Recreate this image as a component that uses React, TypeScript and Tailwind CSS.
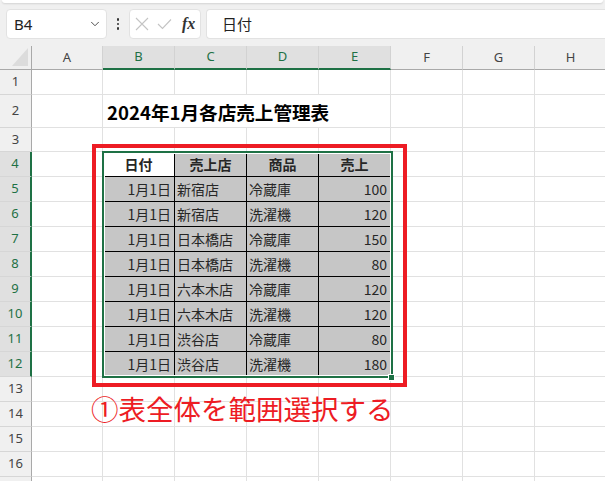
import { ChevronDown } from 'lucide-react'

// Sheet geometry (px): row header, then columns A..H
const COLS = ['A', 'B', 'C', 'D', 'E', 'F', 'G', 'H']
const COL_W = ['w-[71px]', 'w-[72px]', 'w-[72px]', 'w-[72px]', 'w-[72px]', 'w-[72px]', 'w-[72px]', 'w-[72px]']
const ROW_H = ['h-[25px]', 'h-[33px]', 'h-[24px]', 'h-[25px]', 'h-[25px]', 'h-[25px]', 'h-[25px]', 'h-[25px]', 'h-[25px]', 'h-[25px]', 'h-[25px]', 'h-[25px]', 'h-[25px]', 'h-[25px]', 'h-[25px]', 'h-[25px]', 'h-[25px]']

const HEAD = ['日付', '売上店', '商品', '売上']
const DATA = [
  ['1月1日', '新宿店', '冷蔵庫', '100'],
  ['1月1日', '新宿店', '洗濯機', '120'],
  ['1月1日', '日本橋店', '冷蔵庫', '150'],
  ['1月1日', '日本橋店', '洗濯機', '80'],
  ['1月1日', '六本木店', '冷蔵庫', '120'],
  ['1月1日', '六本木店', '洗濯機', '120'],
  ['1月1日', '渋谷店', '冷蔵庫', '80'],
  ['1月1日', '渋谷店', '洗濯機', '180'],
]

const UI_FONT = "font-['Segoe_UI','Noto_Sans',sans-serif]"
const JP_FONT = "font-['Noto_Sans_CJK_JP',sans-serif]"

function FormulaBar() {
  return (
    <div className="h-[46px] shrink-0 bg-[#f0f0f0]">
      <div className="mx-[2px] h-[3px] rounded-b-[6px] bg-white shadow-[0_1px_2px_rgba(0,0,0,0.12)]" />
      <div className="mt-[6px] flex h-[30px] pl-[6px]">
        {/* Name box */}
        <div className="flex w-[101px] items-center justify-between rounded-[4px] border border-[#e2e2e2] bg-white pl-[7px] pr-[4px]">
          <span className={`${UI_FONT} text-[15px] text-[#222]`}>B4</span>
          <ChevronDown size={14} strokeWidth={1.6} className="text-[#444]" />
        </div>
        <div className="flex w-[22px] flex-col items-center justify-center gap-[2px]">
          <span className="h-[2.5px] w-[2.5px] rounded-full bg-[#333]" />
          <span className="h-[2.5px] w-[2.5px] rounded-full bg-[#333]" />
          <span className="h-[2.5px] w-[2.5px] rounded-full bg-[#333]" />
        </div>
        {/* Cancel / enter / function */}
        <div className="flex w-[72px] items-center rounded-[4px] border border-[#e2e2e2] bg-white pl-[4px]">
          <svg width="14" height="14" viewBox="0 0 14 14" className="ml-[1px]">
            <path d="M1 1L13 13M13 1L1 13" stroke="#c4c4c4" strokeWidth="1.1" fill="none" />
          </svg>
          <svg width="15" height="12" viewBox="0 0 15 12" className="ml-[8px]">
            <path d="M1 6L5.5 10.5L14 1.5" stroke="#c4c4c4" strokeWidth="1.1" fill="none" />
          </svg>
          <span className="ml-[10px] font-['Liberation_Serif',serif] text-[16px] font-bold italic leading-none text-[#333]">fx</span>
        </div>
        <div className="ml-[5px] flex flex-1 items-center rounded-l-[4px] border border-r-0 border-[#e2e2e2] bg-white pl-[15px]">
          <span className={`${JP_FONT} text-[15px] text-[#222]`}>日付</span>
        </div>
      </div>
    </div>
  )
}

function ColumnHeader() {
  return (
    <div className={`flex h-[24px] shrink-0 bg-[#f0f0f0] ${UI_FONT} text-[13px]`}>
      <div className="relative w-[32px] shrink-0 border-b border-r border-[#a9a9a9]">
        <svg width="31" height="23" className="absolute left-0 top-0">
          <polygon points="28,2 28,20 12,20" fill="#dcdcdc" />
        </svg>
      </div>
      {COLS.map((c, i) => {
        const sel = i >= 1 && i <= 4
        return (
          <div
            key={c}
            className={`${COL_W[i]} flex shrink-0 items-center justify-center border-r border-[#d2d2d2] ${
              sel ? 'border-b-2 border-b-[#1e7145] bg-[#e0e0e0] text-[#1e7145]' : 'border-b border-b-[#a9a9a9] text-[#444]'
            }`}
          >
            {c}
          </div>
        )
      })}
    </div>
  )
}

function Cell({ row, col }: { row: number; col: number }) {
  // row 1-based, col 0-based (A=0)
  const inTable = row >= 4 && row <= 12 && col >= 1 && col <= 4
  if (row === 2 && col === 1) {
    return (
      <div className="flex w-[288px] shrink-0 items-center border-b border-r border-[#e1e1e1] pl-[4px] pt-[2px]">
        <span className={`${JP_FONT} whitespace-nowrap text-[18.6px] font-bold text-black`}>2024年1月各店売上管理表</span>
      </div>
    )
  }
  if (row === 2 && col >= 2 && col <= 4) return null
  if (inTable) {
    const head = row === 4
    const text = head ? HEAD[col - 1] : DATA[row - 5][col - 1]
    const align = head ? 'justify-center font-bold' : col === 1 || col === 4 ? 'justify-end pr-[3px]' : 'justify-start pl-[2px]'
    return (
      <div
        className={`${COL_W[col]} flex shrink-0 items-center border-b border-r border-black ${
          row === 4 && col === 1 ? 'bg-white' : 'bg-[#c6c6c6]'
        } ${align} ${JP_FONT} text-[14px] text-[#262626]`}
      >
        {text}
      </div>
    )
  }
  return <div className={`${COL_W[col]} shrink-0 border-b border-r border-[#e1e1e1]`} />
}

function SheetRow({ row, label = true }: { row: number; label?: boolean }) {
  const sel = row >= 4 && row <= 12
  return (
    <div className={`flex ${ROW_H[row - 1]} shrink-0`}>
      <div
        className={`flex w-[32px] shrink-0 items-center justify-center border-b border-b-[#d6d6d6] ${UI_FONT} text-[13px] ${
          sel ? 'border-r-2 border-r-[#1e7145] bg-[#e0e0e0] text-[#1e7145]' : 'border-r border-r-[#a9a9a9] bg-[#f0f0f0] text-[#444]'
        }`}
      >
        {label ? row : null}
      </div>
      {COLS.map((_, i) => (
        <Cell key={i} row={row} col={i} />
      ))}
    </div>
  )
}

export default function App() {
  const rows = Array.from({ length: 16 }, (_, i) => i + 1)
  return (
    <div className="flex h-[481px] w-[605px] flex-col overflow-hidden bg-white">
      <FormulaBar />
      <div className="relative flex-1">
        <ColumnHeader />
        {rows.map((r) => (
          <SheetRow key={r} row={r} />
        ))}
        {/* next row is cut by the window edge */}
        <SheetRow row={17} label={false} />

        {/* selection B4:E12 */}
        <div className="absolute left-[102px] top-[105px] h-[227px] w-[291px] border-2 border-[#1e7145] shadow-[inset_0_0_0_1px_#fff]" />
        <div className="absolute left-[388px] top-[328px] h-[7px] w-[7px] border border-white bg-[#1e7145]" />

        {/* annotation */}
        <div className="absolute left-[92px] top-[98px] h-[243px] w-[315px] border-4 border-[#ed1c24]" />
        <div className={`absolute left-[91px] top-[349px] whitespace-nowrap ${JP_FONT} text-[27.5px] leading-none text-[#ed1c24]`}>
          ①表全体を範囲選択する
        </div>
      </div>
    </div>
  )
}
